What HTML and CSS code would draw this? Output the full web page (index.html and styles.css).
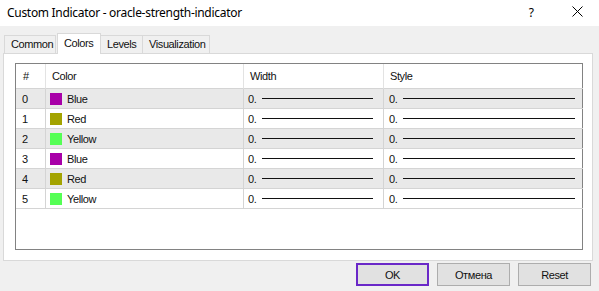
FILE: index.html
```html
<!DOCTYPE html>
<html lang="en">
<head>
    <meta charset="UTF-8">
    <title>Custom Indicator - oracle-strength-indicator</title>
    <link rel="stylesheet" href="styles.css">
</head>
<body>
    <div class="dialog">
        <div class="titlebar">
            <span class="title">Custom Indicator - oracle-strength-indicator</span>
            <span class="help">?</span>
            <svg class="close" width="11" height="11" viewBox="0 0 11 11">
                <path d="M0.5 0.5 L10.5 10.5 M10.5 0.5 L0.5 10.5" stroke="#000" stroke-width="1" fill="none"/>
            </svg>
        </div>

        <div class="content">
            <div class="tabs">
                <div class="tab tab-common">Common</div>
                <div class="tab tab-colors active">Colors</div>
                <div class="tab tab-levels">Levels</div>
                <div class="tab tab-vis">Visualization</div>
            </div>

            <div class="panel">
                <div class="list">
                    <div class="row head">
                        <div class="cell c-num">#</div>
                        <div class="cell c-color">Color</div>
                        <div class="cell c-width">Width</div>
                        <div class="cell c-style">Style</div>
                    </div>
                    <div class="row alt">
                        <div class="cell c-num">0</div>
                        <div class="cell c-color"><span class="swatch purple"></span>Blue</div>
                        <div class="cell c-width">0.<span class="line"></span></div>
                        <div class="cell c-style">0.<span class="line"></span></div>
                    </div>
                    <div class="row">
                        <div class="cell c-num">1</div>
                        <div class="cell c-color"><span class="swatch olive"></span>Red</div>
                        <div class="cell c-width">0.<span class="line"></span></div>
                        <div class="cell c-style">0.<span class="line"></span></div>
                    </div>
                    <div class="row alt">
                        <div class="cell c-num">2</div>
                        <div class="cell c-color"><span class="swatch green"></span>Yellow</div>
                        <div class="cell c-width">0.<span class="line"></span></div>
                        <div class="cell c-style">0.<span class="line"></span></div>
                    </div>
                    <div class="row">
                        <div class="cell c-num">3</div>
                        <div class="cell c-color"><span class="swatch purple"></span>Blue</div>
                        <div class="cell c-width">0.<span class="line"></span></div>
                        <div class="cell c-style">0.<span class="line"></span></div>
                    </div>
                    <div class="row alt">
                        <div class="cell c-num">4</div>
                        <div class="cell c-color"><span class="swatch olive"></span>Red</div>
                        <div class="cell c-width">0.<span class="line"></span></div>
                        <div class="cell c-style">0.<span class="line"></span></div>
                    </div>
                    <div class="row">
                        <div class="cell c-num">5</div>
                        <div class="cell c-color"><span class="swatch green"></span>Yellow</div>
                        <div class="cell c-width">0.<span class="line"></span></div>
                        <div class="cell c-style">0.<span class="line"></span></div>
                    </div>
                </div>
            </div>

            <div class="actions">
                <button class="btn btn-ok">OK</button>
                <button class="btn">Отмена</button>
                <button class="btn">Reset</button>
            </div>
        </div>
    </div>
</body>
</html>
```

FILE: styles.css
```css
body {
    margin: 0;
    padding: 0;
    background-color: #f0f0f0;
    font-family: 'Liberation Sans', Arial, sans-serif;
    color: #000;
}

.dialog {
    width: 599px;
    height: 291px;
    overflow: hidden;
    background-color: #f0f0f0;
}

.titlebar {
    height: 26px;
    background-color: #fff;
    display: flex;
    align-items: center;
    padding-left: 7px;
    padding-right: 16px;
}

.title {
    font-family: 'Noto Sans', sans-serif;
    font-size: 12px;
    letter-spacing: -0.3px;
    flex: 1;
    padding-bottom: 2px;
}

.help {
    font-family: 'Noto Sans', sans-serif;
    font-size: 12px;
    margin-right: 38px;
    padding-bottom: 2px;
}

.close {
    display: block;
    margin-bottom: 3px;
}

.content {
    padding: 0 6px 0 3px;
}

/* tabs */
.tabs {
    display: flex;
    align-items: flex-end;
    height: 20px;
    margin-top: 7px;
    padding-left: 1px;
    font-size: 11px;
    letter-spacing: -0.4px;
}

.tab {
    height: 17px;
    line-height: 17px;
    border: 1px solid #d9d9d9;
    border-bottom: none;
    background-color: #f0f0f0;
    padding-left: 6px;
    box-sizing: content-box;
    color: #111;
}

.tab-common {
    width: 44px;
}

.tab-colors {
    width: 36px;
}

.tab-levels {
    width: 35px;
    border-left: none;
}

.tab-vis {
    width: 60px;
    border-left: none;
}

.tab.active {
    height: 20px;
    line-height: 18px;
    background-color: #fff;
    position: relative;
    z-index: 1;
    margin-bottom: -1px;
    border-left: 1px solid #d9d9d9;
    border-right: 1px solid #d9d9d9;
    margin-left: 1px;
}

/* panel */
.panel {
    border: 1px solid #d9d9d9;
    background-color: #fff;
    padding: 9px 9px 0 11px;
    box-sizing: border-box;
    height: 208px;
}

.list {
    height: 187px;
    box-sizing: border-box;
    border: 1px solid #828282;
    background-color: #fff;
    font-size: 11px;
    letter-spacing: -0.4px;
    color: #111;
}

.row {
    display: grid;
    grid-template-columns: 30px 198px 140px 199px;
    height: 20px;
}

.row.head {
    height: 25px;
}

.row.alt {
    background-color: #e9e9e9;
}

.cell {
    display: flex;
    align-items: center;
    border-right: 1px solid #d4d4d4;
    border-bottom: 1px solid #d4d4d4;
    white-space: nowrap;
}

.head .cell {
    border-right-color: #e3e3e3;
}

.cell.c-style {
    border-right: none;
}

.c-num {
    padding-left: 6px;
}

.head .c-num {
    padding-left: 7px;
}

.c-color {
    padding-left: 4px;
}

.head .c-color {
    padding-left: 6px;
}

.c-width {
    padding-left: 4px;
}

.head .c-width {
    padding-left: 6px;
}

.c-style {
    padding-left: 5px;
}

.head .c-style {
    padding-left: 6px;
}

.swatch {
    width: 12px;
    height: 12px;
    margin-right: 5px;
}

.swatch.purple {
    background-color: #a800a8;
}

.swatch.olive {
    background-color: #a3a300;
}

.swatch.green {
    background-color: #55ff55;
}

.line {
    height: 1.5px;
    background-color: #111;
    margin-left: 6px;
}

.c-width .line {
    width: 111px;
}

.c-style .line {
    width: 172px;
}

/* buttons */
.actions {
    display: flex;
    justify-content: flex-end;
    gap: 8px;
    margin-top: 2px;
    padding-right: 2px;
}

.btn {
    width: 73px;
    height: 23px;
    background-color: #e1e1e1;
    border: 1px solid #adadad;
    font-family: 'Liberation Sans', Arial, sans-serif;
    font-size: 11px;
    letter-spacing: -0.4px;
    color: #111;
    padding: 0;
}

.btn-ok {
    border: 2px solid #6a28c8;
}
```
